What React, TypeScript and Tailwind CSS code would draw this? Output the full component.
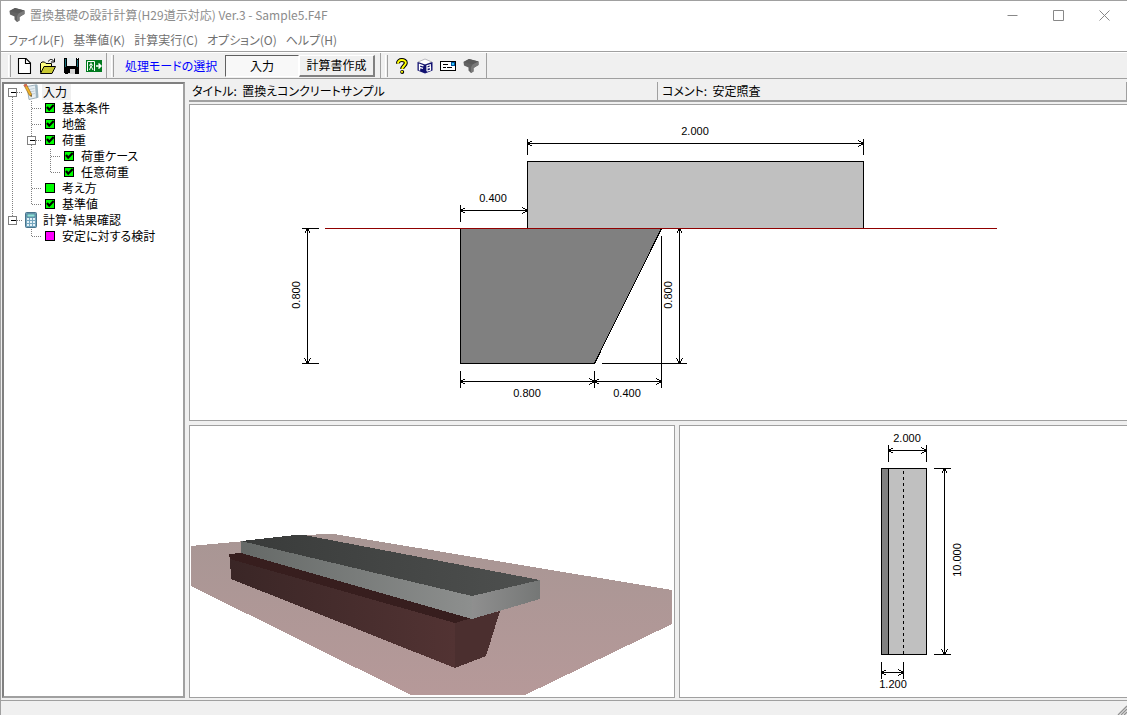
import type { ReactNode } from "react";

const UI_FONT = "font-['Noto_Sans_CJK_JP',sans-serif] [font-feature-settings:'palt']";

/* ---------- icons ---------- */

function FoundationIcon({ size }: { size: number }) {
  return (
    <svg width={size} height={size} viewBox="0 0 16 16" aria-hidden="true">
      <path d="M.5 4 6 1 15.500 3.500V7L10.500 10V13.500L8 15 5.500 12.500V9.500L1 7.500Z" fill="#626262" />
      <path d="M.5 4 6 1 15.500 3.500 9.500 6.500Z" fill="#5a5a5a" />
      <path d="M9.500 6.500 15.500 3.500V7L10.500 10V13.500L8 15V9.500Z" fill="#7a7a7a" />
    </svg>
  );
}

function NewIcon() {
  return (
    <svg width="16" height="16" viewBox="0 0 16 16" aria-hidden="true">
      <path d="M1.500.5H9L13.500 5V15.500H1.500Z" fill="#fff" stroke="#000" strokeWidth="1.100" />
      <path d="M8.500.5V5.500H13.500" fill="none" stroke="#000" strokeWidth="1.100" />
    </svg>
  );
}

function OpenIcon() {
  return (
    <svg width="16" height="16" viewBox="0 0 16 16" aria-hidden="true">
      <path d="M.5 14.500V5.500L2 4H4.500L6 5.500H11.500V8" fill="#ffff80" stroke="#000" />
      <path d="M.5 15.500 4 8.500H15.500L12 15.500Z" fill="#c8c832" stroke="#000" />
      <path d="M8.500 3.500C9.500.8 12 .8 14 3.300M14.500.5V4H11" fill="none" stroke="#000" />
    </svg>
  );
}

function SaveIcon() {
  return (
    <svg width="16" height="16" viewBox="0 0 16 16" shapeRendering="crispEdges" aria-hidden="true">
      <path d="M1 0H16V16H2L1 15Z" fill="#000" />
      <path d="M4 0H13V8H4Z" fill="#e8eef0" />
      <path d="M2 1H3V9H2ZM14 2H15V9H14Z" fill="#16707a" />
      <path d="M5 11H12V16H5Z" fill="#d4d4d4" />
      <path d="M5 11H7V15H5Z" fill="#000" />
      <path d="M14 0H15V1H14Z" fill="#fff" />
    </svg>
  );
}

function ExitIcon() {
  return (
    <svg width="16" height="16" viewBox="0 0 16 16" aria-hidden="true">
      <path d="M0 2H16V14H0Z" fill="#007a1e" />
      <path d="M1.500 13V3.500H8.500V13" fill="none" stroke="#fff" />
      <path d="M5 4.500V8M3 7.500 5 6 7 7.500M5 8 3.500 12M5 8 7 12" fill="none" stroke="#fff" />
      <path d="M10 8H14.500M12.500 5.500 15 8 12.500 10.500" fill="none" stroke="#fff" strokeWidth="1.500" />
    </svg>
  );
}

function HelpIcon() {
  return (
    <svg width="16" height="16" viewBox="0 0 16 16" aria-hidden="true">
      <path d="M4 5.500C3.500 1 12 1 11.800 5 11.600 7.500 8.200 8 8.200 11" fill="none" stroke="#000" strokeWidth="4" />
      <path d="M4 5.500C3.500 1 12 1 11.800 5 11.600 7.500 8.200 8 8.200 11" fill="none" stroke="#ffff00" strokeWidth="2" />
      <circle cx="8.200" cy="14" r="2" fill="#000" />
      <circle cx="8" cy="13.800" r="1.100" fill="#ffff00" />
    </svg>
  );
}

function CubeIcon() {
  return (
    <svg width="16" height="16" viewBox="0 0 16 16" aria-hidden="true">
      <path d="M1 4 8 1 15 4 8 7Z" fill="#fff" stroke="#a8a8b0" strokeWidth=".8" />
      <path d="M.5 4 8 6.500V15.500L.5 12.500Z" fill="#101070" />
      <path d="M8 6.500 15.500 4V12.500L8 15.500Z" fill="#101070" />
      <path d="M2.500 12.500V6.500L6.500 7.800M2.500 9.300 6 10.300" fill="none" stroke="#fff" strokeWidth="1.400" />
      <path d="M10 13.300V7.800L13.300 6.800V9L10 10.200 13.500 9.500V12L10 13.300" fill="none" stroke="#fff" strokeWidth="1.200" />
    </svg>
  );
}

function MailIcon() {
  return (
    <svg width="16" height="16" viewBox="0 0 16 16" shapeRendering="crispEdges" aria-hidden="true">
      <path d="M0 3H16V13H0Z" fill="#000" />
      <path d="M1 4H15V12H1Z" fill="#fff" />
      <path d="M3 6H8V7H3ZM3 9H6V10H3ZM7 9H12V10H7Z" fill="#000" />
      <path d="M11 4H15V8H11Z" fill="#0050a0" />
      <path d="M12 5H14V7H12Z" fill="#30c8f0" />
    </svg>
  );
}

function NotepadIcon() {
  return (
    <svg width="17" height="16" viewBox="0 0 17 16" aria-hidden="true">
      <path d="M4 2.500 13.500.8 14.500 13.500 6 15.500Z" fill="#e6eef2" stroke="#8aa0ac" strokeWidth=".8" />
      <path d="M12 1 14.500.8 15.500 13.500 13 14.300Z" fill="#9db4c0" />
      <path d="M6 5.500 11.500 4.500M6.500 8 11.500 7M7 10.500 12 9.500" stroke="#b6c4cc" strokeWidth=".8" />
      <path d="M.8 1 3.200 0 8.500 10 8.400 12.500 6.300 11.200Z" fill="#f0b428" stroke="#8c5a14" strokeWidth=".6" />
      <path d="M.8 1 3.200 0 4.200 2 1.900 3.100Z" fill="#d8605a" />
      <path d="M7.300 11.800 8.500 11 8.400 12.700Z" fill="#222" />
    </svg>
  );
}

function CalculatorIcon() {
  return (
    <svg width="17" height="16" viewBox="0 0 17 16" aria-hidden="true">
      <rect x="2.500" y=".5" width="11" height="15" rx="1" fill="#74a6be" stroke="#48748c" />
      <rect x="4" y="2" width="8" height="3" fill="#8fe0d8" stroke="#3d6a80" strokeWidth=".6" />
      <g fill="#e4f2f8">
        {[6, 9, 12].map((y) => [4, 7, 10].map((x) => <rect key={`${x}-${y}`} x={x} y={y} width="2" height="2" />))}
      </g>
    </svg>
  );
}

function StatusIcon({ kind }: { kind: "done" | "ready" | "pending" }) {
  return (
    <svg width="17" height="16" viewBox="0 0 17 16" aria-hidden="true">
      <rect x="3.500" y="3.500" width="9" height="9" fill={kind === "pending" ? "#ff00ff" : "#00ff00"} stroke="#000" />
      {kind === "done" && <path d="M5 7 7.200 9.700 11.700 5" fill="none" stroke="#000" strokeWidth="2.200" />}
    </svg>
  );
}

/* ---------- tree ---------- */

type Cell = "tee" | "end" | "pipe" | "none" | "first" | "last" | "middle";

function Connector({ cell }: { cell: Cell }) {
  const toggle = cell === "first" || cell === "last" || cell === "middle";
  const drawing = (
    <svg width="19" height="16" viewBox="0 0 19 16" shapeRendering="crispEdges" aria-hidden="true">
      <g transform="translate(.5 .5)" fill="none" stroke="#808080">
        {cell !== "none" && cell !== "first" && <path d="M8 0V8" strokeDasharray="1 1" />}
        {(cell === "tee" || cell === "pipe" || cell === "first" || cell === "middle") && (
          <path d="M8 8V16" strokeDasharray="1 1" />
        )}
        {cell !== "none" && cell !== "pipe" && <path d="M8 8H19" strokeDasharray="1 1" />}
        {toggle && <rect x="4" y="4" width="8" height="8" fill="#fff" />}
        {toggle && <path d="M6 8H11" stroke="#000" />}
      </g>
    </svg>
  );
  return toggle ? (
    <button type="button" aria-label="折りたたむ">{drawing}</button>
  ) : (
    drawing
  );
}

interface TreeRow {
  label: string;
  cells: Cell[];
  icon: ReactNode;
  selected?: boolean;
}

const TREE: TreeRow[] = [
  { label: "入力", cells: ["first"], icon: <NotepadIcon />, selected: true },
  { label: "基本条件", cells: ["pipe", "tee"], icon: <StatusIcon kind="done" /> },
  { label: "地盤", cells: ["pipe", "tee"], icon: <StatusIcon kind="done" /> },
  { label: "荷重", cells: ["pipe", "middle"], icon: <StatusIcon kind="done" /> },
  { label: "荷重ケース", cells: ["pipe", "pipe", "tee"], icon: <StatusIcon kind="done" /> },
  { label: "任意荷重", cells: ["pipe", "pipe", "end"], icon: <StatusIcon kind="done" /> },
  { label: "考え方", cells: ["pipe", "tee"], icon: <StatusIcon kind="ready" /> },
  { label: "基準値", cells: ["pipe", "end"], icon: <StatusIcon kind="done" /> },
  { label: "計算・結果確認", cells: ["last"], icon: <CalculatorIcon /> },
  { label: "安定に対する検討", cells: ["none", "end"], icon: <StatusIcon kind="pending" /> },
];

function Tree() {
  return (
    <ul role="tree" className="text-xs leading-4">
      {TREE.map((row) => (
        <li key={row.label} role="treeitem" aria-level={row.cells.length} aria-selected={!!row.selected} className="flex h-4 items-center">
          {row.cells.map((cell, i) => (
            <Connector key={i} cell={cell} />
          ))}
          <span className="w-[19px]">{row.icon}</span>
          <span className={row.selected ? "bg-[#f0f0f0] px-px pr-1" : "px-px"}>{row.label}</span>
        </li>
      ))}
    </ul>
  );
}

/* ---------- drawings ---------- */

function HDim({ x1, x2, y }: { x1: number; x2: number; y: number }) {
  return (
    <path
      d={`M${x1} ${y}H${x2}M${x1 + 5} ${y - 3}L${x1} ${y}L${x1 + 5} ${y + 3}M${x2 - 5} ${y - 3}L${x2} ${y}L${x2 - 5} ${y + 3}`}
    />
  );
}

function VDim({ x, y1, y2 }: { x: number; y1: number; y2: number }) {
  return (
    <path
      d={`M${x} ${y1}V${y2}M${x - 3} ${y1 + 5}L${x} ${y1}L${x + 3} ${y1 + 5}M${x - 3} ${y2 - 5}L${x} ${y2}L${x + 3} ${y2 - 5}`}
    />
  );
}

function DimText({ x, y, vertical, children }: { x: number; y: number; vertical?: boolean; children: string }) {
  return (
    <text x={x} y={y} textAnchor="middle" transform={vertical ? `rotate(-90 ${x} ${y})` : undefined}>
      {children}
    </text>
  );
}

const DIM_TEXT = "fill-black font-['Liberation_Sans',sans-serif] text-[11px]";

function SectionView() {
  return (
    <svg viewBox="190 105 937 315" className="size-full" role="img" aria-label="断面図">
      <g transform="translate(.5 .5)" fill="none" stroke="#000" shapeRendering="crispEdges">
        <rect x="527" y="161" width="336" height="67" fill="#c0c0c0" />
        <path d="M460 228H661L594 363H460Z" fill="#808080" />
        <path d="M527 138V154M863 138V154M460 204V221M301 228H318M301 363H318M668 228H686M601 363H686M661 235V387M460 370V387M594 370V387" />
        <HDim x1={527} x2={863} y={143} />
        <HDim x1={460} x2={527} y={210} />
        <HDim x1={460} x2={594} y={381} />
        <HDim x1={594} x2={661} y={381} />
        <VDim x={307} y1={228} y2={363} />
        <VDim x={679} y1={228} y2={363} />
      </g>
      <rect x="325" y="228" width="672" height="1" fill="#900000" shapeRendering="crispEdges" />
      <g className={DIM_TEXT}>
        <DimText x={695} y={135}>2.000</DimText>
        <DimText x={493} y={202}>0.400</DimText>
        <DimText x={527} y={397}>0.800</DimText>
        <DimText x={627} y={397}>0.400</DimText>
        <DimText x={300} y={295} vertical>0.800</DimText>
        <DimText x={672} y={295} vertical>0.800</DimText>
      </g>
    </svg>
  );
}

function PerspectiveView() {
  return (
    <svg viewBox="190 426 484 271" className="size-full" role="img" aria-label="3D表示">
      <defs>
        <linearGradient id="ground" x1="0" y1="0" x2="0" y2="1">
          <stop offset="0" stopColor="#a89694" />
          <stop offset="1" stopColor="#b69999" />
        </linearGradient>
        <linearGradient id="slabTop">
          <stop offset="0" stopColor="#393b3a" />
          <stop offset="1" stopColor="#4e504f" />
        </linearGradient>
        <linearGradient id="slabFront">
          <stop offset="0" stopColor="#656967" />
          <stop offset="1" stopColor="#8d8f8e" />
        </linearGradient>
        <linearGradient id="slabSide">
          <stop offset="0" stopColor="#8f8f8f" />
          <stop offset="1" stopColor="#757776" />
        </linearGradient>
        <linearGradient id="baseFront">
          <stop offset="0" stopColor="#3a2626" />
          <stop offset="1" stopColor="#523333" />
        </linearGradient>
      </defs>
      <g shapeRendering="crispEdges">
        <path d="M191 546 321 534H334L672 590V624L525 695H411L191 586Z" fill="url(#ground)" />
        <path d="M229 554 241 553 472 618 455 623 230 559Z" fill="#371e1e" />
        <path d="M230 559 455 623V668L231 579Z" fill="url(#baseFront)" />
        <path d="M455 623 472 618 500 611 486 656 455 668Z" fill="#4b2f2f" />
        <path d="M241 541 296 535H304L540 580 472 596Z" fill="url(#slabTop)" />
        <path d="M241 541 472 596V619L241 553Z" fill="url(#slabFront)" />
        <path d="M472 596 540 580V599L472 619Z" fill="url(#slabSide)" />
      </g>
    </svg>
  );
}

function PlanView() {
  return (
    <svg viewBox="680 426 447 271" className="size-full" role="img" aria-label="平面図">
      <g transform="translate(.5 .5)" fill="none" stroke="#000" shapeRendering="crispEdges">
        <rect x="881" y="468" width="7" height="186" fill="#808080" />
        <rect x="888" y="468" width="38" height="186" fill="#c0c0c0" />
        <path d="M903 470V654" strokeDasharray="3 3" />
        <path d="M888 444V461M926 444V461M933 468H950M933 654H950M881 661V678M903 661V678" />
        <HDim x1={888} x2={926} y={450} />
        <HDim x1={881} x2={903} y={672} />
        <VDim x={944} y1={468} y2={654} />
      </g>
      <g className={DIM_TEXT}>
        <DimText x={907} y={442}>2.000</DimText>
        <DimText x={893} y={688}>1.200</DimText>
        <DimText x={961} y={560} vertical>10.000</DimText>
      </g>
    </svg>
  );
}

/* ---------- window ---------- */

const MENUS = ["ファイル(F)", "基準値(K)", "計算実行(C)", "オプション(O)", "ヘルプ(H)"];

function WindowControls() {
  const shapes = [
    { label: "最小化", d: "M0 5H10" },
    { label: "最大化", d: "M0 0H10V10H0Z" },
    { label: "閉じる", d: "M0 0 10 10M10 0 0 10" },
  ];
  return (
    <div className="flex">
      {shapes.map((s) => (
        <button key={s.label} type="button" aria-label={s.label} className="flex h-7 w-[46px] items-center justify-center">
          <svg width="11" height="11" viewBox="0 0 11 11" aria-hidden="true">
            <path d={s.d} transform="translate(.5 .5)" fill="none" stroke="#888" />
          </svg>
        </button>
      ))}
    </div>
  );
}

function ToolGroup({ children }: { children: ReactNode }) {
  return (
    <div className="flex items-center border-r border-[#a0a0a0] pl-1">
      <span className="mr-[2px] h-[22px] w-[3px] border-r border-l border-r-[#a0a0a0] border-l-white" />
      {children}
    </div>
  );
}

function ToolButton({ label, children }: { label: string; children: ReactNode }) {
  return (
    <button type="button" aria-label={label} className="flex h-[22px] w-[23px] items-center justify-center">
      {children}
    </button>
  );
}

const PANEL = "min-h-0 min-w-0 border-t border-l border-b border-[#a0a0a0] bg-white";

export default function App() {
  return (
    <div className={`flex h-screen flex-col border-t border-l border-[#a0a0a0] bg-[#f0f0f0] text-xs text-black ${UI_FONT}`}>
      <header className="bg-white">
        <div className="flex h-7 items-center pl-2">
          <FoundationIcon size={16} />
          <h1 className="ml-[5px] flex-1 text-xs font-normal text-[#8c8c8c]">
            置換基礎の設計計算(H29道示対応) Ver.3 - Sample5.F4F
          </h1>
          <WindowControls />
        </div>
        <nav className="flex h-[22px] items-center gap-[9px] pl-[7px] text-[#707070]">
          {MENUS.map((m) => (
            <button key={m} type="button" className="whitespace-nowrap">
              {m}
            </button>
          ))}
        </nav>
      </header>

      <div className="flex h-[28px] items-stretch border-t border-b border-[#a0a0a0] pt-px pl-[3px] shadow-[inset_0_1px_0_#fff]">
        <ToolGroup>
          <ToolButton label="新規"><NewIcon /></ToolButton>
          <ToolButton label="開く"><OpenIcon /></ToolButton>
          <ToolButton label="保存"><SaveIcon /></ToolButton>
          <ToolButton label="終了"><ExitIcon /></ToolButton>
          <span className="w-px" />
        </ToolGroup>
        <ToolGroup>
          <span className="w-[109px] pl-[9px] whitespace-nowrap text-[#0000ff]">処理モードの選択</span>
          <button type="button" aria-pressed="true" className="h-[22px] w-[74px] border border-t-[#606060] border-r-white border-b-white border-l-[#606060] bg-[#f8f8f8]">
            入力
          </button>
          <button type="button" className="mr-[5px] h-[22px] w-[76px] border-t border-r-2 border-b-2 border-l border-t-white border-r-[#808080] border-b-[#808080] border-l-white whitespace-nowrap">
            計算書作成
          </button>
        </ToolGroup>
        <ToolGroup>
          <ToolButton label="ヘルプ"><HelpIcon /></ToolButton>
          <ToolButton label="製品情報"><CubeIcon /></ToolButton>
          <ToolButton label="メール"><MailIcon /></ToolButton>
          <ToolButton label="バージョン情報"><FoundationIcon size={16} /></ToolButton>
          <span className="w-1" />
        </ToolGroup>
      </div>

      <main className="flex min-h-0 flex-1 gap-1 pt-[3px] pl-px">
        <aside className="w-[183px] shrink-0 border-2 border-t-[#808080] border-r-[#a0a0a0] border-b-[#a0a0a0] border-l-[#808080] bg-white">
          <Tree />
        </aside>

        <section className="flex min-w-0 flex-1 flex-col">
          <div className="mb-[2px] flex h-5 text-xs leading-[18px]">
            <div className="w-1/2 border-r border-b-2 border-[#a0a0a0] pl-[3px]">タイトル:&nbsp; 置換えコンクリートサンプル</div>
            <div className="w-1/2 border-r border-b-2 border-[#a0a0a0] pl-1">コメント:&nbsp; 安定照査</div>
          </div>
          <div className={`${PANEL} flex-[315_1_0px]`}>
            <SectionView />
          </div>
          <div className="mt-1 flex min-h-0 flex-[273_1_0px] gap-1 basis-[2px] grow-[271]">
            <div className={`${PANEL} flex-[484_1_0px] border-r`}>
              <PerspectiveView />
            </div>
            <div className={`${PANEL} flex-[447_1_0px]`}>
              <PlanView />
            </div>
          </div>
        </section>
      </main>

      <footer className="mt-[2px] flex h-[15px] items-end justify-end border-t border-[#a0a0a0]">
        <svg width="10" height="10" viewBox="0 0 10 10" aria-hidden="true">
          <path d="M1 10 10 1M4 10 10 4M7 10 10 7" stroke="#909090" strokeWidth="1.300" />
        </svg>
      </footer>
    </div>
  );
}
